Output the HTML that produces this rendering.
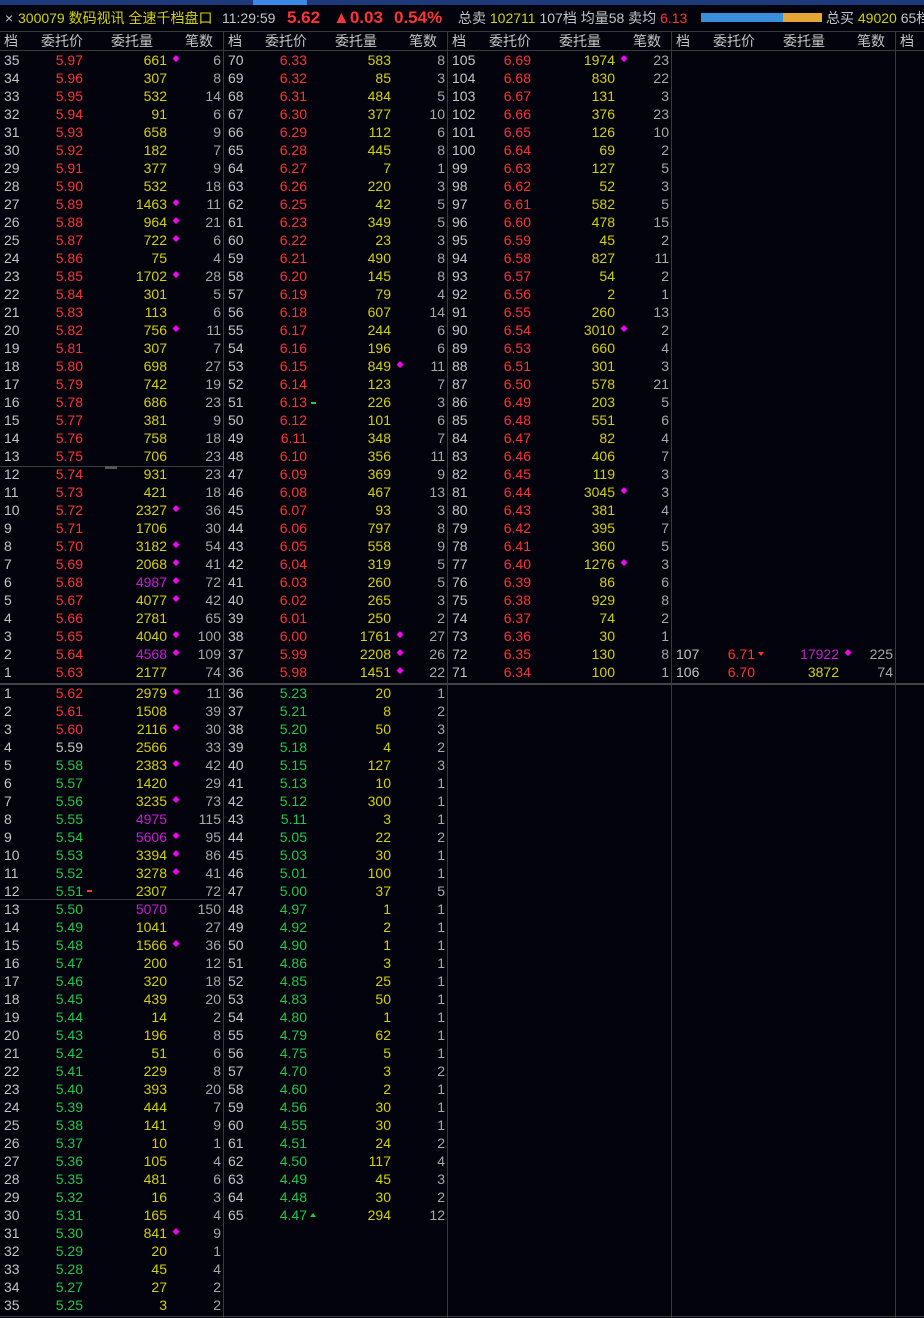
<!DOCTYPE html>
<html><head><meta charset="utf-8">
<style>
*{margin:0;padding:0;box-sizing:border-box}
body{width:924px;height:1318px;background:#03030d;overflow:hidden;position:relative;font-family:"Liberation Sans","Noto Sans CJK SC",sans-serif;font-size:14px;color:#c4c4c4}
.strip{position:absolute;left:0;top:0;width:924px;height:5px;background:#1f3a7a}
.strip i{position:absolute;left:253px;top:0;width:54px;height:5px;background:#3a88e6}
.title{position:absolute;left:0;top:6px;height:24px;line-height:24px;white-space:nowrap;font-size:14px}
.title span{position:absolute;top:0}
.y{color:#d2d200}.r{color:#ff3535}.g{color:#22c84a}.gr{color:#c4c4c4}.p{color:#c81ed2}.c{color:#a8a8a8}
.big{font-size:17px;font-weight:bold}
.hline{position:absolute;left:0;width:924px;height:1px;background:#3a3a3a}
.vline{position:absolute;top:31px;width:1px;height:1287px;background:#3a3a3a}
.hd{position:absolute;top:32px;height:18px;line-height:18px;width:224px}
.hd span{position:absolute;top:0}
table{position:absolute;border-collapse:collapse;table-layout:fixed;width:224px}
td{height:18px;line-height:18px;padding:0;white-space:nowrap;overflow:visible}
td:nth-child(1){width:40px;text-align:left;padding-left:4px;color:#c4c4c4}
td:nth-child(2){width:43px;text-align:right;color:#ff3535}
td:nth-child(3){width:84px;text-align:right;color:#d2d200}
td:nth-child(4){width:18px;text-align:center;color:#ff00ff;font-size:7px}
td:nth-child(5){width:39px;text-align:right;padding-right:3px;color:#a8a8a8}
.G td:nth-child(2){color:#22c84a}
td.w{color:#c4c4c4!important}
td.pp{color:#c81ed2!important}
.mk{position:absolute;width:5px;height:2px}
</style></head><body>
<div class="strip"><i></i></div>
<div class="title">
<span class="gr" style="left:5px">×</span>
<span class="y" style="left:18px">300079 数码视讯 全速千档盘口</span>
<span class="gr" style="left:222px">11:29:59</span>
<span class="r big" style="left:287px">5.62</span>
<span class="r big" style="left:333px">▲0.03</span>
<span class="r big" style="left:394px">0.54%</span>
<span class="gr" style="left:458px">总卖 <b class="y" style="font-weight:normal">102711</b> 107档 均量58 卖均 <b class="r" style="font-weight:normal">6.13</b></span>
<span style="left:701px;top:7px;width:82px;height:9px;background:#3a8fdc"></span>
<span style="left:783px;top:7px;width:39px;height:9px;background:#e5a535"></span>
<span class="gr" style="left:826px">总买 <b class="y" style="font-weight:normal">49020</b> 65档</span>
</div>
<div class="hline" style="top:31px"></div>
<div class="hline" style="top:50px"></div>
<div class="hline" style="top:683px;height:2px;background:#444"></div>
<div class="hline" style="top:1316px"></div>
<div class="hline" style="top:466px;width:223px"></div>
<div class="hline" style="top:899px;width:223px"></div>
<div style="position:absolute;left:105px;top:466px;width:12px;height:3px;background:#555"></div>
<div class="vline" style="left:223px"></div>
<div class="vline" style="left:447px"></div>
<div class="vline" style="left:671px"></div>
<div class="vline" style="left:895px"></div>

<div class="hd" style="left:0"><span style="left:4px">档</span><span style="left:41px">委托价</span><span style="left:111px">委托量</span><span style="left:185px">笔数</span></div>
<div class="hd" style="left:224px"><span style="left:4px">档</span><span style="left:41px">委托价</span><span style="left:111px">委托量</span><span style="left:185px">笔数</span></div>
<div class="hd" style="left:448px"><span style="left:4px">档</span><span style="left:41px">委托价</span><span style="left:111px">委托量</span><span style="left:185px">笔数</span></div>
<div class="hd" style="left:672px"><span style="left:4px">档</span><span style="left:41px">委托价</span><span style="left:111px">委托量</span><span style="left:185px">笔数</span></div>
<div class="hd" style="left:896px"><span style="left:4px">档</span></div>

<table style="left:0;top:51px">
<tr><td>35</td><td>5.97</td><td>661</td><td>◆</td><td>6</td></tr>
<tr><td>34</td><td>5.96</td><td>307</td><td></td><td>8</td></tr>
<tr><td>33</td><td>5.95</td><td>532</td><td></td><td>14</td></tr>
<tr><td>32</td><td>5.94</td><td>91</td><td></td><td>6</td></tr>
<tr><td>31</td><td>5.93</td><td>658</td><td></td><td>9</td></tr>
<tr><td>30</td><td>5.92</td><td>182</td><td></td><td>7</td></tr>
<tr><td>29</td><td>5.91</td><td>377</td><td></td><td>9</td></tr>
<tr><td>28</td><td>5.90</td><td>532</td><td></td><td>18</td></tr>
<tr><td>27</td><td>5.89</td><td>1463</td><td>◆</td><td>11</td></tr>
<tr><td>26</td><td>5.88</td><td>964</td><td>◆</td><td>21</td></tr>
<tr><td>25</td><td>5.87</td><td>722</td><td>◆</td><td>6</td></tr>
<tr><td>24</td><td>5.86</td><td>75</td><td></td><td>4</td></tr>
<tr><td>23</td><td>5.85</td><td>1702</td><td>◆</td><td>28</td></tr>
<tr><td>22</td><td>5.84</td><td>301</td><td></td><td>5</td></tr>
<tr><td>21</td><td>5.83</td><td>113</td><td></td><td>6</td></tr>
<tr><td>20</td><td>5.82</td><td>756</td><td>◆</td><td>11</td></tr>
<tr><td>19</td><td>5.81</td><td>307</td><td></td><td>7</td></tr>
<tr><td>18</td><td>5.80</td><td>698</td><td></td><td>27</td></tr>
<tr><td>17</td><td>5.79</td><td>742</td><td></td><td>19</td></tr>
<tr><td>16</td><td>5.78</td><td>686</td><td></td><td>23</td></tr>
<tr><td>15</td><td>5.77</td><td>381</td><td></td><td>9</td></tr>
<tr><td>14</td><td>5.76</td><td>758</td><td></td><td>18</td></tr>
<tr><td>13</td><td>5.75</td><td>706</td><td></td><td>23</td></tr>
<tr><td>12</td><td>5.74</td><td>931</td><td></td><td>23</td></tr>
<tr><td>11</td><td>5.73</td><td>421</td><td></td><td>18</td></tr>
<tr><td>10</td><td>5.72</td><td>2327</td><td>◆</td><td>36</td></tr>
<tr><td>9</td><td>5.71</td><td>1706</td><td></td><td>30</td></tr>
<tr><td>8</td><td>5.70</td><td>3182</td><td>◆</td><td>54</td></tr>
<tr><td>7</td><td>5.69</td><td>2068</td><td>◆</td><td>41</td></tr>
<tr><td>6</td><td>5.68</td><td class="pp">4987</td><td>◆</td><td>72</td></tr>
<tr><td>5</td><td>5.67</td><td>4077</td><td>◆</td><td>42</td></tr>
<tr><td>4</td><td>5.66</td><td>2781</td><td></td><td>65</td></tr>
<tr><td>3</td><td>5.65</td><td>4040</td><td>◆</td><td>100</td></tr>
<tr><td>2</td><td>5.64</td><td class="pp">4568</td><td>◆</td><td>109</td></tr>
<tr><td>1</td><td>5.63</td><td>2177</td><td></td><td>74</td></tr>
</table>

<table style="left:224px;top:51px">
<tr><td>70</td><td>6.33</td><td>583</td><td></td><td>8</td></tr>
<tr><td>69</td><td>6.32</td><td>85</td><td></td><td>3</td></tr>
<tr><td>68</td><td>6.31</td><td>484</td><td></td><td>5</td></tr>
<tr><td>67</td><td>6.30</td><td>377</td><td></td><td>10</td></tr>
<tr><td>66</td><td>6.29</td><td>112</td><td></td><td>6</td></tr>
<tr><td>65</td><td>6.28</td><td>445</td><td></td><td>8</td></tr>
<tr><td>64</td><td>6.27</td><td>7</td><td></td><td>1</td></tr>
<tr><td>63</td><td>6.26</td><td>220</td><td></td><td>3</td></tr>
<tr><td>62</td><td>6.25</td><td>42</td><td></td><td>5</td></tr>
<tr><td>61</td><td>6.23</td><td>349</td><td></td><td>5</td></tr>
<tr><td>60</td><td>6.22</td><td>23</td><td></td><td>3</td></tr>
<tr><td>59</td><td>6.21</td><td>490</td><td></td><td>8</td></tr>
<tr><td>58</td><td>6.20</td><td>145</td><td></td><td>8</td></tr>
<tr><td>57</td><td>6.19</td><td>79</td><td></td><td>4</td></tr>
<tr><td>56</td><td>6.18</td><td>607</td><td></td><td>14</td></tr>
<tr><td>55</td><td>6.17</td><td>244</td><td></td><td>6</td></tr>
<tr><td>54</td><td>6.16</td><td>196</td><td></td><td>6</td></tr>
<tr><td>53</td><td>6.15</td><td>849</td><td>◆</td><td>11</td></tr>
<tr><td>52</td><td>6.14</td><td>123</td><td></td><td>7</td></tr>
<tr><td>51</td><td>6.13</td><td>226</td><td></td><td>3</td></tr>
<tr><td>50</td><td>6.12</td><td>101</td><td></td><td>6</td></tr>
<tr><td>49</td><td>6.11</td><td>348</td><td></td><td>7</td></tr>
<tr><td>48</td><td>6.10</td><td>356</td><td></td><td>11</td></tr>
<tr><td>47</td><td>6.09</td><td>369</td><td></td><td>9</td></tr>
<tr><td>46</td><td>6.08</td><td>467</td><td></td><td>13</td></tr>
<tr><td>45</td><td>6.07</td><td>93</td><td></td><td>3</td></tr>
<tr><td>44</td><td>6.06</td><td>797</td><td></td><td>8</td></tr>
<tr><td>43</td><td>6.05</td><td>558</td><td></td><td>9</td></tr>
<tr><td>42</td><td>6.04</td><td>319</td><td></td><td>5</td></tr>
<tr><td>41</td><td>6.03</td><td>260</td><td></td><td>5</td></tr>
<tr><td>40</td><td>6.02</td><td>265</td><td></td><td>3</td></tr>
<tr><td>39</td><td>6.01</td><td>250</td><td></td><td>2</td></tr>
<tr><td>38</td><td>6.00</td><td>1761</td><td>◆</td><td>27</td></tr>
<tr><td>37</td><td>5.99</td><td>2208</td><td>◆</td><td>26</td></tr>
<tr><td>36</td><td>5.98</td><td>1451</td><td>◆</td><td>22</td></tr>
</table>
<div class="mk" style="left:311px;top:402px;background:#22c84a"></div>

<table style="left:448px;top:51px">
<tr><td>105</td><td>6.69</td><td>1974</td><td>◆</td><td>23</td></tr>
<tr><td>104</td><td>6.68</td><td>830</td><td></td><td>22</td></tr>
<tr><td>103</td><td>6.67</td><td>131</td><td></td><td>3</td></tr>
<tr><td>102</td><td>6.66</td><td>376</td><td></td><td>23</td></tr>
<tr><td>101</td><td>6.65</td><td>126</td><td></td><td>10</td></tr>
<tr><td>100</td><td>6.64</td><td>69</td><td></td><td>2</td></tr>
<tr><td>99</td><td>6.63</td><td>127</td><td></td><td>5</td></tr>
<tr><td>98</td><td>6.62</td><td>52</td><td></td><td>3</td></tr>
<tr><td>97</td><td>6.61</td><td>582</td><td></td><td>5</td></tr>
<tr><td>96</td><td>6.60</td><td>478</td><td></td><td>15</td></tr>
<tr><td>95</td><td>6.59</td><td>45</td><td></td><td>2</td></tr>
<tr><td>94</td><td>6.58</td><td>827</td><td></td><td>11</td></tr>
<tr><td>93</td><td>6.57</td><td>54</td><td></td><td>2</td></tr>
<tr><td>92</td><td>6.56</td><td>2</td><td></td><td>1</td></tr>
<tr><td>91</td><td>6.55</td><td>260</td><td></td><td>13</td></tr>
<tr><td>90</td><td>6.54</td><td>3010</td><td>◆</td><td>2</td></tr>
<tr><td>89</td><td>6.53</td><td>660</td><td></td><td>4</td></tr>
<tr><td>88</td><td>6.51</td><td>301</td><td></td><td>3</td></tr>
<tr><td>87</td><td>6.50</td><td>578</td><td></td><td>21</td></tr>
<tr><td>86</td><td>6.49</td><td>203</td><td></td><td>5</td></tr>
<tr><td>85</td><td>6.48</td><td>551</td><td></td><td>6</td></tr>
<tr><td>84</td><td>6.47</td><td>82</td><td></td><td>4</td></tr>
<tr><td>83</td><td>6.46</td><td>406</td><td></td><td>7</td></tr>
<tr><td>82</td><td>6.45</td><td>119</td><td></td><td>3</td></tr>
<tr><td>81</td><td>6.44</td><td>3045</td><td>◆</td><td>3</td></tr>
<tr><td>80</td><td>6.43</td><td>381</td><td></td><td>4</td></tr>
<tr><td>79</td><td>6.42</td><td>395</td><td></td><td>7</td></tr>
<tr><td>78</td><td>6.41</td><td>360</td><td></td><td>5</td></tr>
<tr><td>77</td><td>6.40</td><td>1276</td><td>◆</td><td>3</td></tr>
<tr><td>76</td><td>6.39</td><td>86</td><td></td><td>6</td></tr>
<tr><td>75</td><td>6.38</td><td>929</td><td></td><td>8</td></tr>
<tr><td>74</td><td>6.37</td><td>74</td><td></td><td>2</td></tr>
<tr><td>73</td><td>6.36</td><td>30</td><td></td><td>1</td></tr>
<tr><td>72</td><td>6.35</td><td>130</td><td></td><td>8</td></tr>
<tr><td>71</td><td>6.34</td><td>100</td><td></td><td>1</td></tr>
</table>

<table style="left:672px;top:645px">
<tr><td>107</td><td>6.71</td><td class="pp">17922</td><td>◆</td><td>225</td></tr>
<tr><td>106</td><td>6.70</td><td>3872</td><td></td><td>74</td></tr>
</table>
<div style="position:absolute;left:758px;top:652px;width:0;height:0;border-left:3px solid transparent;border-right:3px solid transparent;border-top:4px solid #ff3535"></div>

<table class="G" style="left:0;top:684px">
<tr><td>1</td><td style="color:#ff3535">5.62</td><td>2979</td><td>◆</td><td>11</td></tr>
<tr><td>2</td><td style="color:#ff3535">5.61</td><td>1508</td><td></td><td>39</td></tr>
<tr><td>3</td><td style="color:#ff3535">5.60</td><td>2116</td><td>◆</td><td>30</td></tr>
<tr><td>4</td><td class="w">5.59</td><td>2566</td><td></td><td>33</td></tr>
<tr><td>5</td><td>5.58</td><td>2383</td><td>◆</td><td>42</td></tr>
<tr><td>6</td><td>5.57</td><td>1420</td><td></td><td>29</td></tr>
<tr><td>7</td><td>5.56</td><td>3235</td><td>◆</td><td>73</td></tr>
<tr><td>8</td><td>5.55</td><td class="pp">4975</td><td></td><td>115</td></tr>
<tr><td>9</td><td>5.54</td><td class="pp">5606</td><td>◆</td><td>95</td></tr>
<tr><td>10</td><td>5.53</td><td>3394</td><td>◆</td><td>86</td></tr>
<tr><td>11</td><td>5.52</td><td>3278</td><td>◆</td><td>41</td></tr>
<tr><td>12</td><td>5.51</td><td>2307</td><td></td><td>72</td></tr>
<tr><td>13</td><td>5.50</td><td class="pp">5070</td><td></td><td>150</td></tr>
<tr><td>14</td><td>5.49</td><td>1041</td><td></td><td>27</td></tr>
<tr><td>15</td><td>5.48</td><td>1566</td><td>◆</td><td>36</td></tr>
<tr><td>16</td><td>5.47</td><td>200</td><td></td><td>12</td></tr>
<tr><td>17</td><td>5.46</td><td>320</td><td></td><td>18</td></tr>
<tr><td>18</td><td>5.45</td><td>439</td><td></td><td>20</td></tr>
<tr><td>19</td><td>5.44</td><td>14</td><td></td><td>2</td></tr>
<tr><td>20</td><td>5.43</td><td>196</td><td></td><td>8</td></tr>
<tr><td>21</td><td>5.42</td><td>51</td><td></td><td>6</td></tr>
<tr><td>22</td><td>5.41</td><td>229</td><td></td><td>8</td></tr>
<tr><td>23</td><td>5.40</td><td>393</td><td></td><td>20</td></tr>
<tr><td>24</td><td>5.39</td><td>444</td><td></td><td>7</td></tr>
<tr><td>25</td><td>5.38</td><td>141</td><td></td><td>9</td></tr>
<tr><td>26</td><td>5.37</td><td>10</td><td></td><td>1</td></tr>
<tr><td>27</td><td>5.36</td><td>105</td><td></td><td>4</td></tr>
<tr><td>28</td><td>5.35</td><td>481</td><td></td><td>6</td></tr>
<tr><td>29</td><td>5.32</td><td>16</td><td></td><td>3</td></tr>
<tr><td>30</td><td>5.31</td><td>165</td><td></td><td>4</td></tr>
<tr><td>31</td><td>5.30</td><td>841</td><td>◆</td><td>9</td></tr>
<tr><td>32</td><td>5.29</td><td>20</td><td></td><td>1</td></tr>
<tr><td>33</td><td>5.28</td><td>45</td><td></td><td>4</td></tr>
<tr><td>34</td><td>5.27</td><td>27</td><td></td><td>2</td></tr>
<tr><td>35</td><td>5.25</td><td>3</td><td></td><td>2</td></tr>
</table>
<div class="mk" style="left:87px;top:890px;background:#ff3535"></div>

<table class="G" style="left:224px;top:684px">
<tr><td>36</td><td>5.23</td><td>20</td><td></td><td>1</td></tr>
<tr><td>37</td><td>5.21</td><td>8</td><td></td><td>2</td></tr>
<tr><td>38</td><td>5.20</td><td>50</td><td></td><td>3</td></tr>
<tr><td>39</td><td>5.18</td><td>4</td><td></td><td>2</td></tr>
<tr><td>40</td><td>5.15</td><td>127</td><td></td><td>3</td></tr>
<tr><td>41</td><td>5.13</td><td>10</td><td></td><td>1</td></tr>
<tr><td>42</td><td>5.12</td><td>300</td><td></td><td>1</td></tr>
<tr><td>43</td><td>5.11</td><td>3</td><td></td><td>1</td></tr>
<tr><td>44</td><td>5.05</td><td>22</td><td></td><td>2</td></tr>
<tr><td>45</td><td>5.03</td><td>30</td><td></td><td>1</td></tr>
<tr><td>46</td><td>5.01</td><td>100</td><td></td><td>1</td></tr>
<tr><td>47</td><td>5.00</td><td>37</td><td></td><td>5</td></tr>
<tr><td>48</td><td>4.97</td><td>1</td><td></td><td>1</td></tr>
<tr><td>49</td><td>4.92</td><td>2</td><td></td><td>1</td></tr>
<tr><td>50</td><td>4.90</td><td>1</td><td></td><td>1</td></tr>
<tr><td>51</td><td>4.86</td><td>3</td><td></td><td>1</td></tr>
<tr><td>52</td><td>4.85</td><td>25</td><td></td><td>1</td></tr>
<tr><td>53</td><td>4.83</td><td>50</td><td></td><td>1</td></tr>
<tr><td>54</td><td>4.80</td><td>1</td><td></td><td>1</td></tr>
<tr><td>55</td><td>4.79</td><td>62</td><td></td><td>1</td></tr>
<tr><td>56</td><td>4.75</td><td>5</td><td></td><td>1</td></tr>
<tr><td>57</td><td>4.70</td><td>3</td><td></td><td>2</td></tr>
<tr><td>58</td><td>4.60</td><td>2</td><td></td><td>1</td></tr>
<tr><td>59</td><td>4.56</td><td>30</td><td></td><td>1</td></tr>
<tr><td>60</td><td>4.55</td><td>30</td><td></td><td>1</td></tr>
<tr><td>61</td><td>4.51</td><td>24</td><td></td><td>2</td></tr>
<tr><td>62</td><td>4.50</td><td>117</td><td></td><td>4</td></tr>
<tr><td>63</td><td>4.49</td><td>45</td><td></td><td>3</td></tr>
<tr><td>64</td><td>4.48</td><td>30</td><td></td><td>2</td></tr>
<tr><td>65</td><td>4.47</td><td>294</td><td></td><td>12</td></tr>
</table>
<div style="position:absolute;left:310px;top:1213px;width:0;height:0;border-left:3px solid transparent;border-right:3px solid transparent;border-bottom:4px solid #22c84a"></div>
</body></html>
